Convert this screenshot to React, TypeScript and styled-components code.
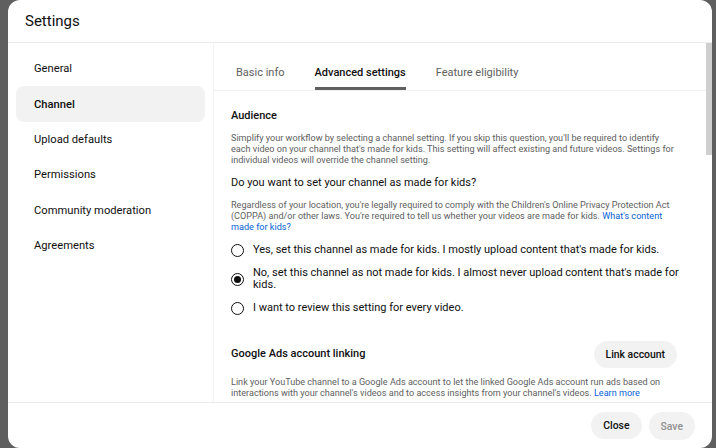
import React from 'react';
import styled, { createGlobalStyle } from 'styled-components';

const GlobalStyle = createGlobalStyle`
  html, body {
    margin: 0;
    padding: 0;
    background: #5f5f5f;
    font-family: Roboto, "Liberation Sans", Arial, sans-serif;
    color: #0f0f0f;
  }
`;

const Dialog = styled.section`
  margin-left: 8px;
  width: 704px;
  height: 448px;
  background: #fff;
  border-radius: 12px;
  display: flex;
  flex-direction: column;
  overflow: hidden;
`;

const Header = styled.header`
  height: 42px;
  border-bottom: 1px solid #ececec;
  display: flex;
  align-items: center;
  padding-left: 17px;
  font-size: 15px;
  color: #0f0f0f;
`;

const Body = styled.div`
  display: flex;
  height: 359px;
`;

const Sidebar = styled.nav`
  width: 189px;
  padding: 8px;
  border-right: 1px solid #f3f3f3;
  display: flex;
  flex-direction: column;
`;

const NavItem = styled.div<{ $active?: boolean }>`
  height: 35.4px;
  flex: none;
  display: flex;
  align-items: center;
  padding-left: 18px;
  border-radius: 8px;
  font-size: 11.2px;
  color: #0f0f0f;
  font-weight: ${({ $active }) => ($active ? 500 : 400)};
  background: ${({ $active }) => ($active ? '#f2f2f2' : 'transparent')};
`;

const Panel = styled.div`
  position: relative;
  flex: 1;
  display: flex;
  flex-direction: column;
`;

const Tabs = styled.div`
  height: 47px;
  border-bottom: 1px solid #f1f1f1;
  display: flex;
  gap: 30px;
  padding-left: 22px;
`;

const Tab = styled.div<{ $active?: boolean }>`
  display: flex;
  align-items: center;
  font-size: 11px;
  color: ${({ $active }) => ($active ? '#0f0f0f' : '#606060')};
  font-weight: ${({ $active }) => ($active ? 500 : 400)};
  border-bottom: 3px solid ${({ $active }) => ($active ? '#606060' : 'transparent')};
  padding-top: 14px;
`;

const Content = styled.div`
  padding: 18px 30px 0 17px;
`;

const Heading = styled.h3<{ $mt?: number }>`
  margin: ${({ $mt }) => $mt ?? 0}px 0 0;
  font-size: 11px;
  line-height: 14px;
  font-weight: ${({ $mt }) => ($mt ? 400 : 500)};
  color: #0f0f0f;
`;

const Desc = styled.p<{ $mt?: number }>`
  margin: ${({ $mt }) => $mt ?? 9.5}px 0 0;
  max-width: 447px;
  font-size: 9.1px;
  line-height: 11px;
  color: #606060;
`;

const A = styled.span`
  color: #065fd4;
`;

const RadioList = styled.div`
  margin-top: 11px;
  display: flex;
  flex-direction: column;
  gap: 10.5px;
`;

const RadioRow = styled.label`
  display: flex;
  align-items: center;
  gap: 9px;
  font-size: 11px;
  line-height: 12px;
  color: #0f0f0f;
`;

const Circle = styled.span<{ $checked?: boolean }>`
  flex: none;
  width: 11px;
  height: 11px;
  border: 1.5px solid #0f0f0f;
  border-radius: 50%;
  display: flex;
  align-items: center;
  justify-content: center;
  &::after {
    content: '';
    display: ${({ $checked }) => ($checked ? 'block' : 'none')};
    width: 7px;
    height: 7px;
    border-radius: 50%;
    background: #0f0f0f;
  }
`;

const LinkRow = styled.div`
  margin-top: 26px;
  display: flex;
  align-items: center;
  justify-content: space-between;
`;

const SubHeading = styled.h3`
  margin: 0;
  font-size: 11px;
  line-height: 14px;
  font-weight: 500;
  color: #0f0f0f;
`;

const PillButton = styled.button<{ $disabled?: boolean; $mr?: number }>`
  border: none;
  background: #f2f2f2;
  border-radius: 14px;
  height: ${({ $disabled }) => ($disabled ? 28 : 27)}px;
  padding: 0 12px;
  margin-right: ${({ $mr }) => $mr ?? 0}px;
  font-family: inherit;
  font-size: 10.4px;
  font-weight: 500;
  color: ${({ $disabled }) => ($disabled ? '#909090' : '#0f0f0f')};
  cursor: pointer;
`;

const Footer = styled.footer`
  flex: 1;
  border-top: 1px solid #ececec;
  display: flex;
  justify-content: flex-end;
  align-items: flex-start;
  padding: 9px 17px 0 0;
  gap: 7px;
`;

const ScrollThumb = styled.div`
  position: absolute;
  right: 0;
  top: 0;
  width: 6px;
  height: 112px;
  background: #cfcfcf;
`;

const navItems = [
  'General',
  'Channel',
  'Upload defaults',
  'Permissions',
  'Community moderation',
  'Agreements',
];

const options = [
  "Yes, set this channel as made for kids. I mostly upload content that's made for kids.",
  "No, set this channel as not made for kids. I almost never upload content that's made for kids.",
  'I want to review this setting for every video.',
];

const App = () => {
  return (
    <>
      <GlobalStyle />
      <Dialog>
        <Header>Settings</Header>
        <Body>
          <Sidebar>
            {navItems.map((item) => (
              <NavItem key={item} $active={item === 'Channel'}>
                {item}
              </NavItem>
            ))}
          </Sidebar>
          <Panel>
            <Tabs>
              <Tab>Basic info</Tab>
              <Tab $active>Advanced settings</Tab>
              <Tab>Feature eligibility</Tab>
            </Tabs>
            <Content>
              <Heading>Audience</Heading>
              <Desc>
                Simplify your workflow by selecting a channel setting. If you skip this question, you'll be required to identify
                each video on your channel that's made for kids. This setting will affect existing and future videos. Settings for
                individual videos will override the channel setting.
              </Desc>
              <Heading $mt={10.5}>Do you want to set your channel as made for kids?</Heading>
              <Desc>
                Regardless of your location, you're legally required to comply with the Children's Online Privacy Protection Act
                (COPPA) and/or other laws. You're required to tell us whether your videos are made for kids.{' '}
                <A>What's content made for kids?</A>
              </Desc>
              <RadioList>
                {options.map((opt, i) => (
                  <RadioRow key={opt}>
                    <Circle $checked={i === 1} />
                    {opt}
                  </RadioRow>
                ))}
              </RadioList>
              <LinkRow>
                <SubHeading>Google Ads account linking</SubHeading>
                <PillButton $mr={5}>Link account</PillButton>
              </LinkRow>
              <Desc>
                Link your YouTube channel to a Google Ads account to let the linked Google Ads account run ads based on
                interactions with your channel's videos and to access insights from your channel's videos. <A>Learn more</A>
              </Desc>
            </Content>
            <ScrollThumb />
          </Panel>
        </Body>
        <Footer>
          <PillButton>Close</PillButton>
          <PillButton $disabled>Save</PillButton>
        </Footer>
      </Dialog>
    </>
  );
};

export default App;
